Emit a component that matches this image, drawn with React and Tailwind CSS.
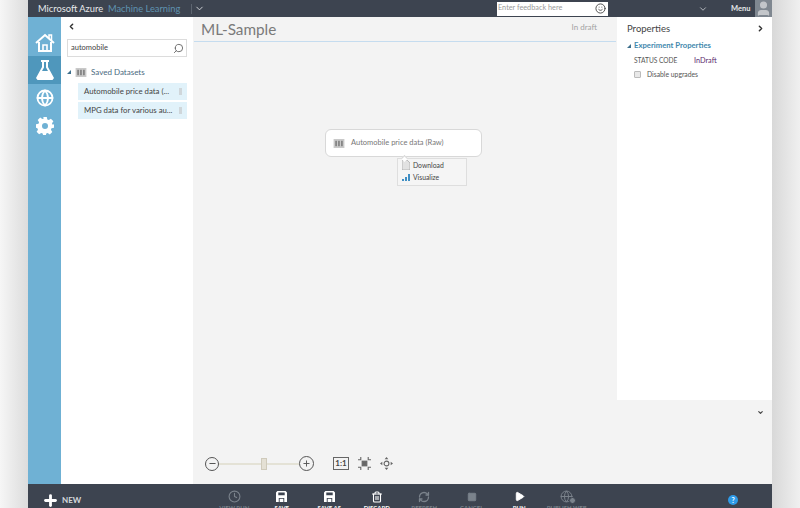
import { Search, Smile, ChevronDown, ChevronLeft, ChevronRight, Clock, RefreshCw, Plus, Minus, Play, Square, Trash2, Globe, User } from 'lucide-react';

const font = { fontFamily: 'Lato, "Open Sans", sans-serif' };

function DatasetIcon({ className }) {
  return (
    <svg viewBox="0 0 12 10" className={className}>
      <rect width="12" height="10" fill="#c9c9c9" />
      <rect x="2" y="2" width="1.5" height="6" fill="#6f6f6f" />
      <rect x="5.2" y="2" width="1.5" height="6" fill="#6f6f6f" />
      <rect x="8.5" y="2" width="1.5" height="6" fill="#6f6f6f" />
    </svg>
  );
}

function SaveIcon({ className }) {
  return (
    <svg viewBox="0 0 12 12" className={className} fill="#fff">
      <path d="M0 1.5 1.5 0h9L12 1.5V12H9V7.5H3V12H0ZM2.5 1.5V4.5h7V1.5Z" fillRule="evenodd" />
      <rect x="4" y="8.5" width="4" height="3.5" />
    </svg>
  );
}

function PublishIcon() {
  return (
    <div className="relative w-[14px] h-[14px]">
      <Globe className="w-[13px] h-[13px] text-[#7b838c]" strokeWidth={1.8} />
      <div className="absolute right-[-2px] bottom-0 w-[7px] h-[7px] rounded-full bg-[#7b838c] border border-[#3d4450]" />
    </div>
  );
}

function HomeIcon() {
  return (
    <svg viewBox="0 0 20 19" className="w-[20px] h-[19px]" fill="none" stroke="#fff" strokeWidth="2">
      <path d="M1 10 10 2l9 8" />
      <path d="M14 5V2h2.500v5" strokeWidth="1.500" />
      <path d="M4 9v9h12V9" />
      <path d="M8 18v-6h4v6" strokeWidth="1.600" />
    </svg>
  );
}

function FlaskIcon() {
  return (
    <svg viewBox="0 0 18 20" className="w-[18px] h-[20px]">
      <path d="M5 0h8v2h-1v5l6 11-1.500 2h-15L0 18 6 7V2H5Z" fill="#fff" />
      <path d="M8 2h2v5.500L12 11H6l2-3.500Z" fill="#4f97bc" />
    </svg>
  );
}

function GearIcon() {
  return (
    <svg viewBox="0 0 18 18" className="w-[18px] h-[18px]">
      <path
        fillRule="evenodd"
        fill="#fff"
        d="M7.200 0h3.600l.5 2.500 1.500.6 2.100-1.400 2.500 2.500-1.400 2.100.6 1.500L18 7.200v3.600l-2.500.5-.6 1.500 1.400 2.100-2.500 2.500-2.100-1.400-1.500.6-.4 2.400H7.200l-.5-2.500-1.500-.6-2.100 1.400-2.500-2.500 1.400-2.100-.6-1.500L0 10.800V7.200l2.500-.5.6-1.500-1.400-2.100 2.500-2.500 2.100 1.400 1.500-.6ZM9 6a3 3 0 1 0 0 6 3 3 0 0 0 0-6Z"
      />
    </svg>
  );
}

const ACTIONS = [
  { label: 'VIEW RUN', icon: <Clock className="w-[13px] h-[13px] text-[#7b838c]" />, muted: true },
  { label: 'SAVE', icon: <SaveIcon className="w-[11px] h-[11px]" /> },
  { label: 'SAVE AS', icon: <SaveIcon className="w-[11px] h-[11px]" /> },
  { label: 'DISCARD', icon: <Trash2 className="w-[12px] h-[12px] text-white" strokeWidth={2.2} /> },
  { label: 'REFRESH', icon: <RefreshCw className="w-[12px] h-[12px] text-[#7b838c]" strokeWidth={2.6} />, muted: true },
  { label: 'CANCEL', icon: <Square className="w-[10px] h-[10px] text-[#7b838c] fill-[#7b838c]" />, muted: true },
  { label: 'RUN', icon: <Play className="w-[11px] h-[11px] text-white fill-white" /> },
  { label: 'PUBLISH WEB', icon: <PublishIcon />, muted: true },
];

export default function App() {
  return (
    <div className="h-[508px] w-[800px] overflow-hidden flex bg-[#e8e8e8]" style={font}>
      <div className="w-[28px] bg-gradient-to-r from-[#f6f6f6] to-[#dcdcdc]" />

      <div className="w-[744px] flex flex-col">
        {/* top bar */}
        <div className="h-[17px] bg-[#3d4450] flex items-center text-white shrink-0 whitespace-nowrap">
          <div className="ml-[10px] w-[459px] flex items-center">
            <span className="w-[70px] text-[9.300px] text-[#e6e8ea]">Microsoft Azure</span>
            <span className="w-[83px] text-[9.300px] text-[#5f93b0]">Machine Learning</span>
            <div className="w-px h-[10px] bg-[#5d6570]" />
            <ChevronDown className="ml-[2px] w-[11px] h-[11px] text-[#d8dade]" />
          </div>
          <div className="w-[111px] h-[14px] bg-white flex items-center justify-between pl-[1px] pr-[2px]">
            <span className="text-[7.300px] text-[#9a9a9a]">Enter feedback here</span>
            <Smile className="w-[11px] h-[11px] text-[#444]" />
          </div>
          <ChevronDown className="ml-[90px] w-[10px] h-[10px] text-[#c8cbd0]" />
          <span className="ml-[23px] w-[18px] text-[7.5px] font-bold text-[#e6e8ea]">Menu</span>
          <div className="ml-[6px] w-[17px] h-[17px] bg-[#7f8790] flex items-end justify-center overflow-hidden">
            <User className="w-[17px] h-[17px] text-[#c3c6ca] fill-[#c3c6ca]" />
          </div>
        </div>

        <div className="flex-1 flex min-h-0">
          {/* nav rail */}
          <div className="w-[33px] bg-[#6fb1d4] flex flex-col shrink-0">
            <div className="h-[39px] flex items-end justify-center pb-[4px]">
              <HomeIcon />
            </div>
            <div className="h-[28px] bg-[#4f97bc] flex items-center justify-center">
              <FlaskIcon />
            </div>
            <div className="h-[28px] flex items-center justify-center">
              <Globe className="w-[18px] h-[18px] text-white" strokeWidth={2.4} />
            </div>
            <div className="h-[28px] flex items-center justify-center">
              <GearIcon />
            </div>
          </div>

          {/* module palette */}
          <div className="w-[132px] bg-white shrink-0 px-[6px]">
            <div className="h-[18px] flex items-center">
              <ChevronLeft className="w-[9px] h-[9px] text-[#333]" strokeWidth={4} />
            </div>
            <div className="mt-[4px] h-[18px] w-[120px] border border-[#dcdcdc] flex items-center justify-between pl-[3px] pr-[2px]">
              <span className="text-[7.5px] text-[#444]">automobile</span>
              <Search className="w-[11px] h-[11px] text-[#666] -scale-x-100" />
            </div>
            <div className="mt-[7px] h-[16px] flex items-center">
              <span className="w-0 h-0 border-l-[4px] border-l-transparent border-b-[4px] border-b-[#3d6f8c]" />
              <DatasetIcon className="ml-[4px] w-[12px] h-[9px]" />
              <span className="ml-[4px] text-[8px] text-[#4a6a80]">Saved Datasets</span>
            </div>
            <div className="mt-[3px] ml-[11px] w-[109px] flex flex-col gap-[2px]">
              {['Automobile price data (...', 'MPG data for various au...'].map((name) => (
                <div key={name} className="h-[17px] bg-[#e1f2fa] flex items-center justify-between pl-[6px] pr-[5px]">
                  <span className="text-[7.800px] text-[#444] whitespace-nowrap">{name}</span>
                  <span className="w-[3px] h-[7px] bg-[#cfd6da]" />
                </div>
              ))}
            </div>
          </div>

          {/* canvas */}
          <div className="relative w-[424px] bg-[#f3f3f3] shrink-0">
            <div className="h-[25px] mx-[1px] border-b border-[#c5dcef] flex justify-between px-[7px]">
              <span className="text-[15.300px] leading-[24px] text-[#7a7a7a]">ML-Sample</span>
              <span className="mr-[12px] mt-[4px] text-[8px] text-[#a3a3a3]">In draft</span>
            </div>

            <div className="absolute left-[132px] top-[112px] w-[157px] h-[28px] bg-white border border-[#d8d8d8] rounded-[6px] flex items-center pl-[7px]">
              <DatasetIcon className="w-[12px] h-[9px]" />
              <span className="ml-[6px] text-[7.5px] text-[#777]">Automobile price data (Raw)</span>
            </div>
            <div className="absolute left-[204px] top-[141px] w-[70px] h-[28px] bg-[#f5f5f5] border border-[#dedede] flex flex-col justify-center pl-[4px] pb-[2px]">
              <div className="absolute left-[4px] top-[-3px] w-[5px] h-[5px] rotate-45 bg-white border-l border-t border-[#d8d8d8]" />
              <div className="h-[12px] flex items-center">
                <svg viewBox="0 0 8 10" className="w-[8px] h-[10px]"><path d="M0 0h5l3 3v7H0Z" fill="#e2e2e2" stroke="#9a9a9a" strokeWidth="0.6" /></svg>
                <span className="ml-[3px] text-[6.800px] text-[#444]">Download</span>
              </div>
              <div className="h-[12px] flex items-center">
                <svg viewBox="0 0 8 8" className="w-[8px] h-[8px]"><path d="M0 6h2v2H0ZM3 4h2v4H3ZM6 1h2v7H6Z" fill="#3f8fc4" /></svg>
                <span className="ml-[3px] text-[6.800px] text-[#444]">Visualize</span>
              </div>
            </div>

            {/* zoom controls */}
            <div className="absolute left-[12px] top-[439px] flex items-center">
              <div className="w-[14px] h-[14px] rounded-full border border-[#555] flex items-center justify-center"><Minus className="w-[9px] h-[9px] text-[#555]" strokeWidth={3} /></div>
              <div className="relative w-[80px] h-[2px] bg-[#e4e2d6]">
                <div className="absolute left-[42px] top-[-5px] w-[6px] h-[12px] bg-[#e4e0d4] border border-[#cfcabb]" />
              </div>
              <div className="w-[15px] h-[15px] rounded-full border border-[#555] flex items-center justify-center"><Plus className="w-[9px] h-[9px] text-[#555]" strokeWidth={2.5} /></div>
              <div className="ml-[19px] w-[16px] h-[13px] border border-[#666] text-[8px] leading-[11px] text-center text-[#444] font-bold">1:1</div>
              <svg viewBox="0 0 14 14" className="ml-[9px] w-[13px] h-[13px]" fill="none" stroke="#666" strokeWidth="1.200">
                <rect x="4.500" y="4.500" width="5" height="5" fill="#666" />
                <path d="M3 0v3H0M11 0v3h3M3 14v-3H0M11 14v-3h3" />
              </svg>
              <svg viewBox="0 0 14 14" className="ml-[9px] w-[13px] h-[13px]" fill="#666">
                <path d="M7 0 9 2.500H5ZM7 14l2-2.500H5ZM0 7l2.500-2v4ZM14 7l-2.500-2v4Z" />
                <circle cx="7" cy="7" r="2.600" fill="none" stroke="#666" strokeWidth="1.200" />
              </svg>
            </div>
          </div>

          {/* properties */}
          <div className="w-[155px] shrink-0 flex flex-col bg-white">
            <div className="h-[383px] pl-[10px] pr-[7px]">
              <div className="flex items-center justify-between h-[23px]">
                <span className="mt-[2px] text-[9.500px] text-[#444]">Properties</span>
                <ChevronRight className="w-[9px] h-[9px] text-[#333]" strokeWidth={4} />
              </div>
              <div className="flex items-center h-[11px]">
                <span className="w-0 h-0 border-l-[4px] border-l-transparent border-b-[4px] border-b-[#3d6f8c]" />
                <span className="ml-[3px] text-[7.700px] font-bold text-[#3f88ad]">Experiment Properties</span>
              </div>
              <div className="mt-[3px] ml-[7px] flex items-center h-[14px]">
                <span className="text-[6.600px] text-[#555] w-[60px]">STATUS CODE</span>
                <span className="text-[7.300px] text-[#5d2a6e]">InDraft</span>
              </div>
              <div className="ml-[7px] flex items-center h-[12px]">
                <span className="w-[7px] h-[7px] bg-[#e8e8e8] border border-[#bbb] rounded-[1px]" />
                <span className="ml-[6px] text-[6.800px] text-[#555]">Disable upgrades</span>
              </div>
            </div>
            <div className="flex-1 bg-[#f3f3f3] flex justify-end pr-[8px] pt-[9px]">
              <ChevronDown className="w-[7px] h-[7px] text-[#444]" strokeWidth={4} />
            </div>
          </div>
        </div>

        {/* bottom command bar */}
        <div className="h-[24px] bg-[#3d4450] shrink-0 flex relative overflow-hidden">
          <div className="ml-[14px] mt-[8px] flex items-center">
            <Plus className="w-[17px] h-[17px] text-white" strokeWidth={4} />
            <span className="ml-[3px] text-[8px] font-bold text-[#d5d8dc]">NEW</span>
          </div>
          <div className="absolute left-[182.500px] top-[6px] flex">
            {ACTIONS.map((a) => (
              <div key={a.label} className="w-[47.5px] flex flex-col items-center">
                <div className="h-[13px] flex items-center justify-center">{a.icon}</div>
                <span className={`mt-[2px] text-[6px] leading-[6px] font-bold whitespace-nowrap ${a.muted ? 'text-[#7b838c]' : 'text-white'}`}>{a.label}</span>
              </div>
            ))}
          </div>
          <div className="absolute left-[700px] top-[11px] w-[10px] h-[10px] rounded-full bg-[#2f9be8] text-white text-[7px] leading-[10px] text-center font-bold">?</div>
        </div>
      </div>

      <div className="w-[28px] bg-gradient-to-r from-[#d8d8d8] to-[#f0f0f0]" />
    </div>
  );
}
